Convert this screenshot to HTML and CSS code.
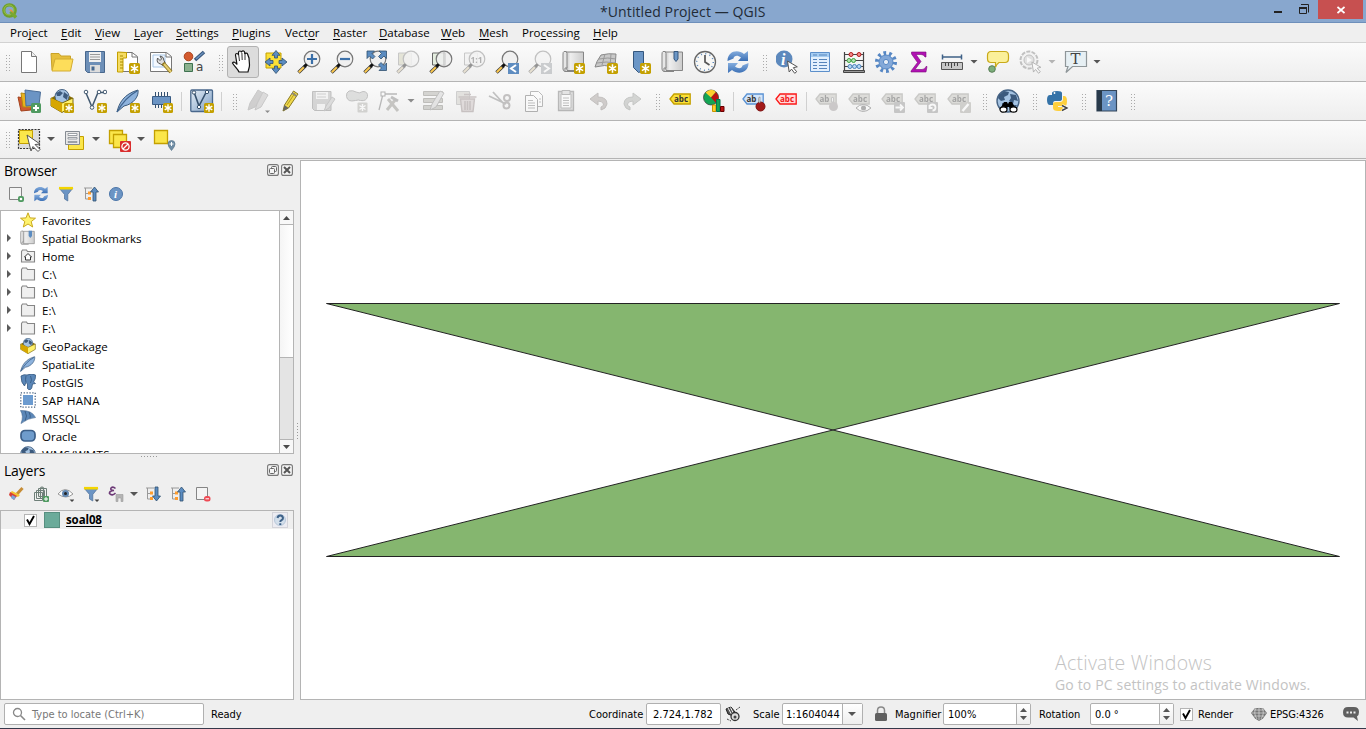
FILE: index.html
```html
<!DOCTYPE html>
<html lang="en">
<head>
<meta charset="utf-8">
<title>*Untitled Project — QGIS</title>
<link rel="stylesheet" href="styles.css">
</head>
<body>
<svg class="defs" width="0" height="0" aria-hidden="true">
  <defs>
    <linearGradient id="gGray" x1="0" x2="1"><stop offset="0" stop-color="#bdbdbd"/><stop offset=".3" stop-color="#eee"/><stop offset="1" stop-color="#ccc"/></linearGradient>
    <linearGradient id="gBlue" x1="0" x2="1" y2="1"><stop offset="0" stop-color="#e4edf6"/><stop offset="1" stop-color="#7f9fc4"/></linearGradient>
    <linearGradient id="gSync" y2="1" x2="0"><stop offset="0" stop-color="#86aede"/><stop offset="1" stop-color="#3a6fb5"/></linearGradient>
  </defs>
  <symbol id="star" viewBox="0 0 10 10"><rect width="10" height="10" rx="1.5" fill="#c4a000"/><path d="M5 1.2v7.6M1.7 3.1l6.6 3.8M8.3 3.1L1.7 6.9" stroke="#fff" stroke-width="1.4"/></symbol>
  <symbol id="lens" viewBox="0 0 24 24"><circle cx="15" cy="9" r="7.8" fill="#eee" fill-opacity=".85" stroke="#777" stroke-width="1.2"/><path d="M1.500 22.500l7-6.800" stroke="#3a3a3a" stroke-width="3.400"/><path d="M1.800 22.200l5-4.900" stroke="#fcc94f" stroke-width="2"/><path d="M7.500 16.500l2.300-2.300" stroke="#111" stroke-width="3"/></symbol>
  <symbol id="cursor" viewBox="0 0 12 14"><path d="M1 1l9.800 5.800-4 .9 3.400 4-2 1.600-3.200-4.200L2.700 12z" fill="#fff" stroke="#555" stroke-width="1"/></symbol>
  <symbol id="sync" viewBox="0 0 24 24"><path d="M1.500 11C1.500 1 12-1 18 4l4-3V11h-10l3-3.500C11 4.500 8 6 7.500 8.500z" fill="url(#gSync)"/><path d="M22.500 13c0 10-10.500 12-16.500 7l-4 3V13h10l-3 3.500c4 3 7 1.500 7.500-1z" fill="url(#gSync)"/></symbol>
  <symbol id="globe" viewBox="0 0 24 24"><circle cx="12" cy="12" r="11" fill="#a5c3e2" stroke="#476485" stroke-width="1.400"/><path d="M3 6l5-4 5 1-1 3-4 2 1 3-4 1-3-3zM14 5l6 1 2 6-4-1-1 4-4-3 2-3zM6 14l5 1 1 4-3 3-3-4zM17 16l4 0-3 4z" fill="#3c5a7d"/></symbol>
  <symbol id="tag" viewBox="0 0 22 12"><path d="M1 6l4-5h16.200v10H5z" stroke-width="1.300"/></symbol>
  <symbol id="feather" viewBox="0 0 24 24"><path d="M1 23C3 14 8 5 22 1c1 6-4 14-14 16z" fill="#8db2dc" stroke="#3a597b"/><path d="M1 23C6 14 12 7 21 2" fill="none" stroke="#3f648f" stroke-width="1.300"/></symbol>
  <symbol id="gpkg" viewBox="0 0 24 24"><path d="M1 9l11-6 11 6-11 6z" fill="#8a6d00"/><circle cx="12" cy="7.500" r="7" fill="#a5c3e2" stroke="#476485"/><path d="M6 4l4-2 3 2-3 3-3 0zM14 3l4 3-1 5-4-3z" fill="#3c5a7d"/><path d="M1 9l11 5 11-5v8l-11 6.500L1 17z" fill="#fff16b" stroke="#6b5900" stroke-width=".9"/><path d="M1 9l11 5v9.500L1 17z" fill="#d6a600"/></symbol>
  <symbol id="pencil" viewBox="0 0 24 24"><path d="M4 22l1.500-6L14.500 2l4.500 3L9.500 19z" fill="#f0d84a" stroke="#8a7a22"/><path d="M13 4l4.500 3" stroke="#888" stroke-width="2"/><path d="M4 22l1.500-6 4 3z" fill="#666"/><path d="M8 16l8-12" stroke="#b19b20" stroke-width="1"/></symbol>
  <symbol id="roll" viewBox="0 0 24 24"><path d="M3 2h18.500v18.500H5z" fill="url(#gGray)" stroke="#858585"/><path d="M2 1.500q3-1 3 2V18H3v3.500Q1 21 1 19V4Q1 2 2 1.500zM3 21.500h10" fill="#e6e6e6" stroke="#858585"/></symbol>
  <symbol id="folder" viewBox="0 0 16 16"><path d="M1.500 3.500l1-1.500h4l1 1.500h7v10.500h-13z" fill="#efefef" stroke="#858585" stroke-width="1.100"/></symbol>
  <symbol id="funnel" viewBox="0 0 16 16"><path d="M1 2h14L9.800 8.500V15L6.500 13V8.500z" fill="#6b94c4" stroke="#4c6f98" stroke-width=".7"/><path d="M1 2.200h14" stroke="#f4d500" stroke-width="2.600"/></symbol>
  <symbol id="treeup" viewBox="0 0 16 16"><path d="M1 2h8M2.500 2v11M2.500 7.500h4M2.500 13h4" fill="none" stroke="#999"/><path d="M5 5.500h3v3H5zM5 11h3v3H5z" fill="#ff9d2e"/><path d="M11.500 1l4 5h-2.500v9h-3V6H7.500z" fill="#5b8cc1" stroke="#31506f" stroke-width=".8"/></symbol>
  <symbol id="treedown" viewBox="0 0 16 16"><path d="M1 2h8M2.500 2v11M2.500 7.500h4M2.500 13h4" fill="none" stroke="#999"/><path d="M5 5.500h3v3H5zM5 11h3v3H5z" fill="#ff9d2e"/><path d="M11.500 15l4-5h-2.500V1h-3v9H7.500z" fill="#5b8cc1" stroke="#31506f" stroke-width=".8"/></symbol>
  <symbol id="float" viewBox="0 0 12 12"><rect x=".6" y=".6" width="10.800" height="10.800" rx="2" fill="#f4f4f4" stroke="#777" stroke-width="1.100"/><rect x="4.500" y="2.500" width="5" height="5" rx="1" fill="none" stroke="#666"/><rect x="2.500" y="4.500" width="5" height="5" rx="1" fill="#f4f4f4" stroke="#666"/></symbol>
  <symbol id="close" viewBox="0 0 12 12"><rect x=".6" y=".6" width="10.800" height="10.800" rx="2" fill="#f4f4f4" stroke="#777" stroke-width="1.100"/><path d="M3 3l6 6M9 3l-6 6" stroke="#555" stroke-width="2"/></symbol>
</svg>

<header class="titlebar">
  <svg class="app-icon" viewBox="0 0 16 16"><circle cx="7.500" cy="7.500" r="5.700" fill="none" stroke="#6fa02b" stroke-width="3.200"/><circle cx="7" cy="7" r="5" fill="none" stroke="#a8cb55" stroke-width=".7"/><path d="M8.500 8.500l5.500 6" stroke="#78a830" stroke-width="3.400"/><path d="M6.500 6.500h3l2.500 4z" fill="#ee913f"/></svg>
  <div class="window-title">*Untitled Project — QGIS</div>
  <div class="window-buttons">
    <svg class="min" viewBox="0 0 10 14"><path d="M1 12h8" stroke="#222" stroke-width="2"/></svg>
    <svg class="max" viewBox="0 0 12 12"><path d="M3 .5h7.500v8" fill="none" stroke="#222" stroke-width="1"/><path d="M1.500 3.500h7v6h-7z" fill="none" stroke="#222"/><path d="M1 4h8" stroke="#222" stroke-width="2"/></svg>
    <div class="close-btn"><svg viewBox="0 0 8 8"><path d="M.5 1l7 6M7.500 1l-7 6" stroke="#fff" stroke-width="1.700"/></svg></div>
  </div>
</header>

<nav class="menubar">
  <span>Pro<u>j</u>ect</span><span><u>E</u>dit</span><span><u>V</u>iew</span><span><u>L</u>ayer</span><span><u>S</u>ettings</span><span><u>P</u>lugins</span><span>Vect<u>o</u>r</span><span><u>R</u>aster</span><span><u>D</u>atabase</span><span><u>W</u>eb</span><span><u>M</u>esh</span><span>Pro<u>c</u>essing</span><span><u>H</u>elp</span>
</nav>

<div class="toolbar">
  <i class="grip first"></i>
  <svg class="tool" viewBox="0 0 24 24"><path d="M4.500 1.500h10l5 5v16h-15z" fill="#fff" stroke="#777"/><path d="M14.500 1.500v5h5" fill="#eee" stroke="#777"/></svg>
  <svg class="tool" viewBox="0 0 24 24"><path d="M1 3.500h8l2 2.500h9.500v14H2z" fill="#e6bf3c" stroke="#c9a227"/><path d="M5 9h18l-2.500 12H2z" fill="#fddd5a" stroke="#d3ac32"/></svg>
  <svg class="tool" viewBox="0 0 24 24"><path d="M2.500 1.500h19v21H4.500l-2-2z" fill="#6d8fb7" stroke="#48678c"/><path d="M6 2h12v10H6z" fill="#f0f0f0"/><path d="M7 4.500h10M7 7h10M7 9.500h10" stroke="#999"/><path d="M7 15h10v7.500H7z" fill="#ddd"/><path d="M8.500 16.500h3v4h-3z" fill="#456890"/></svg>
  <svg class="tool" viewBox="0 0 24 24"><path d="M2 2.500h14l5.500 4v15H2z" fill="#fff" stroke="#777"/><path d="M16 2.500v4.500h5" fill="none" stroke="#777"/><path d="M1.500 2v20h5.500V8h3.500V2.500z" fill="#f5dc63" stroke="#c4a000"/><path d="M4 6h3M4 9h3M4 12h3M4 15h3M4 18h3" stroke="#a98c00"/><use href="#star" x="13" y="13" width="11" height="11"/></svg>
  <svg class="tool" viewBox="0 0 24 24"><path d="M1.500 2.500h16l5 4v15h-21z" fill="#fff" stroke="#777"/><path d="M4 5h12v12H4z" fill="#f4f9ff" stroke="#a7c6e6"/><path d="M17 2.500V7h5" fill="none" stroke="#777"/><path d="M8.500 8q-1.500 5 3 6l2.500 1.500 2-3-1-2q0-4-4-4.500l1.500 3-1.500 1.500z" fill="#ddd" stroke="#555"/><path d="M14 13l8 9" stroke="#8b7320" stroke-width="3.800"/><path d="M15 14l7 8" stroke="#e6cf70" stroke-width="2"/></svg>
  <svg class="tool" viewBox="0 0 24 24"><circle cx="6.500" cy="6.500" r="4.300" fill="#d35a2e" stroke="#aa401a"/><path d="M13 10L22 2" stroke="#39567b" stroke-width="3.600"/><path d="M14 9l7.500-6.500" stroke="#6b92bf" stroke-width="1.500"/><path d="M2.500 13.500h8v8h-8z" fill="#8bb18e" stroke="#3e7250"/><text x="14" y="21" class="glyph-a">a</text></svg>
  <i class="grip wide"></i>
  <svg class="tool active" viewBox="0 0 24 24"><path d="M8 22c-1-3-5-6-6.500-9 1-2 3-.5 4.500 1.500L4.500 5c0-2 2.500-2 3 0V2.500c0-2 2.800-2 3 0V2c.5-1.800 3-1.500 3.200.5V4c.6-1.500 2.800-1.200 3 .5L18 8l.5 7c0 3-1 4-1.500 7z" fill="#fff" stroke="#111" stroke-width="1.200"/><path d="M7.700 5l.8 6M10.900 3l.3 7M14 4v6" stroke="#333"/></svg>
  <svg class="tool" viewBox="0 0 24 24"><path d="M2 3h15v15H2z" fill="#fbe036" stroke="#c4a000"/><path d="M12 .5l4 4.800h-2.500V8h-3V5.300H8zM12 23.500l4-4.800h-2.500V16h-3v2.700H8zM1 12l5-4v2.500h3v3H6V16zM23 12l-5-4v2.500h-3v3h3V16z" fill="#5b8cc1" stroke="#31506f" stroke-width=".8"/></svg>
  <svg class="tool" viewBox="0 0 24 24"><use href="#lens"/><path d="M15 4v10M10 9h10" stroke="#3c70a8" stroke-width="2.200"/></svg>
  <svg class="tool" viewBox="0 0 24 24"><use href="#lens"/><path d="M10 9h10" stroke="#3c70a8" stroke-width="2.200"/></svg>
  <svg class="tool" viewBox="0 0 24 24"><use href="#lens"/><path d="M4 1h7.500L9 3.500l3 3L9.500 9l-3-3L4 8.500zM23.500 1v7.500L21 6l-3 3-2.500-2.500 3-3L16 1zM23.500 20.500H16l2.500-2.500-3-3 2.500-2.500 3 3 2.500-2.500z" fill="#5b8cc1" stroke="#31506f" stroke-width=".8"/></svg>
  <svg class="tool off" viewBox="0 0 24 24"><path d="M2.500 3h13v12h-13z" fill="#d3d06c" stroke="#888"/><use href="#lens"/></svg>
  <svg class="tool" viewBox="0 0 24 24"><path d="M3.500 3h13v12h-13z" fill="#e5eee0" stroke="#666"/><use href="#lens"/><path d="M15 2v14" stroke="#bbb"/></svg>
  <svg class="tool off" viewBox="0 0 24 24"><path d="M2.500 3h13v12h-13z" fill="#eee" stroke="#888"/><use href="#lens"/><text x="8.500" y="12.500" class="glyph-ratio">1:1</text></svg>
  <svg class="tool" viewBox="0 0 24 24"><use href="#lens"/><path d="M13 13h11v11H13z" fill="#5e8cc0"/><path d="M21 15l-5 3.500 5 3.500" fill="none" stroke="#fff" stroke-width="2"/></svg>
  <svg class="tool off" viewBox="0 0 24 24"><use href="#lens"/><path d="M13 13h11v11H13z" fill="#8a9aa8"/><path d="M16 15l5 3.500-5 3.500" fill="none" stroke="#fff" stroke-width="2"/></svg>
  <svg class="tool" viewBox="0 0 24 24"><use href="#roll" x="1"/><use href="#star" x="13" y="13" width="11" height="11"/></svg>
  <svg class="tool" viewBox="0 0 24 24"><path d="M7 5q8-2 15-1l-1 13Q10 14 1 17q1-5 6-12z" fill="#c9c9c9" stroke="#888"/><path d="M5 9q9-2 17 0M3 13q9-2 19 0M11 4L8 15M17 4l-1 12" fill="none" stroke="#999"/><use href="#star" x="13" y="13" width="11" height="11"/></svg>
  <svg class="tool" viewBox="0 0 24 24"><path d="M6.500 1.500h10v19l-5 2-5-5z" fill="#6b96c6" stroke="#35577e"/><use href="#star" x="13" y="13" width="11" height="11"/></svg>
  <svg class="tool" viewBox="0 0 24 24"><use href="#roll" x="1"/><path d="M14 1.500h4V9l-2 2.500L14 9z" fill="#6b96c6" stroke="#35577e"/></svg>
  <svg class="tool" viewBox="0 0 24 24"><circle cx="12" cy="12" r="10.500" fill="#f7f7f5" stroke="#666" stroke-width="1.300"/><circle cx="12" cy="12" r="8.300" fill="none" stroke="#5c88bb" stroke-width="1.500" stroke-dasharray="1 3.350"/><path d="M12 5v7l4.500 3" fill="none" stroke="#555" stroke-width="1.700"/></svg>
  <svg class="tool" viewBox="0 0 24 24"><use href="#sync"/></svg>
  <i class="grip wide"></i>
  <svg class="tool" viewBox="0 0 24 24"><circle cx="8" cy="9" r="8.500" fill="#5d89bd"/><text x="5" y="15" class="glyph-info">i</text><use href="#cursor" x="10.500" y="10" width="12" height="14"/></svg>
  <svg class="tool" viewBox="0 0 24 24"><path d="M1.500 2.500h19v19h-19z" fill="#e3f0fd" stroke="#5c8fca"/><path d="M2 3h18v4H2z" fill="#a5ccf1"/><path d="M4 5h4M10 5h8M4 9.500h4M10 9.500h8M4 12.500h4M10 12.500h8M4 15.500h4M10 15.500h8M4 18.500h4M10 18.500h8" stroke="#5685bb"/></svg>
  <svg class="tool" viewBox="-1 0 24 24"><path d="M1.500 2v19M20.500 2v19M1 4.500h20M1 10.500h20M1 16.500h20" stroke="#444" stroke-width="1.200"/><path d="M.5 20.500h21v2h-21z" fill="#999" stroke="#444"/><g fill="#f28a8a" stroke="#b41919"><circle cx="8" cy="4.500" r="2"/><circle cx="16" cy="4.500" r="2"/></g><g fill="#b4e2b4" stroke="#40a340"><circle cx="6" cy="10.500" r="2"/><circle cx="10.500" cy="10.500" r="2"/></g><g fill="#b9d8f5" stroke="#4c83bb"><circle cx="7" cy="16.500" r="2"/><circle cx="11.500" cy="16.500" r="2"/><circle cx="16" cy="16.500" r="2"/></g></svg>
  <svg class="tool" viewBox="1 0 24 24"><circle cx="12" cy="12" r="9" fill="none" stroke="#5687c4" stroke-width="4" stroke-dasharray="2.700 2.955"/><circle cx="12" cy="12" r="7" fill="#83a8d8" stroke="#5687c4"/><circle cx="12" cy="12" r="2.600" fill="#e7eef7" stroke="#5687c4"/></svg>
  <svg class="tool" viewBox="1 0 24 24"><path d="M4.500 2h14.500v5h-1Q17 4.500 14 4.500H9l5 7-6 8h7q3 0 4-3h1l-1 5.500H4V21l6.500-8.500L4.500 4z" fill="#b112b3" stroke="#780b7a" stroke-width=".6"/></svg>
  <svg class="tool" viewBox="1 0 24 24"><path d="M2 7h20M2.500 4.500v5M21.500 4.500v5" stroke="#3f6187" stroke-width="1.500"/><path d="M1.500 12.500h21v7h-21z" fill="#c8c8c8" stroke="#555"/><path d="M5.500 13v3M8.500 13v3M11.500 13v5M14.500 13v3M17.500 13v3" stroke="#444"/></svg>
  <i class="arrow"></i>
  <svg class="tool" viewBox="0 0 24 24"><path d="M5 1.500h14q3.500 0 3.500 4v3q0 4-3.500 4h-6q-3 2-3.500 5 0-3 0-5H5q-3.500 0-3.500-4v-3q0-4 3.500-4z" fill="#fbf09a" stroke="#c9aa1a" stroke-width="1.200"/><circle cx="6" cy="19" r="3.300" fill="#7bae7a" stroke="#587d56"/></svg>
  <svg class="tool off" viewBox="0 0 24 24"><circle cx="10" cy="10" r="8.500" fill="#eee" stroke="#777" stroke-width="2" stroke-dasharray="4 1.300"/><circle cx="10" cy="10" r="5" fill="#c6c6c6" stroke="#777"/><path d="M8 7l5 3-5 3z" fill="#fff"/><use href="#cursor" x="12" y="11" width="11" height="13"/></svg>
  <i class="arrow faint"></i>
  <svg class="tool" viewBox="0 0 24 24"><path d="M1.500 1.500h21v15H8.500l-6.500 6 2-6H1.500z" fill="#e7f0f4" stroke="#8f9699" stroke-width="1.200"/><text x="6.500" y="14" class="glyph-t">T</text></svg>
  <i class="arrow"></i>
</div>

<div class="toolbar">
  <i class="grip first"></i>
  <svg class="tool" viewBox="0 0 24 24"><path d="M1 8l14 2-1 11-10 1z" fill="#cf5b30" stroke="#a3411c"/><path d="M4 4l13 2-1 12H6z" fill="#e9b31e" stroke="#b98a0c"/><path d="M8 1l15.500 2-1.500 13-13 1z" fill="#6b94c4" stroke="#4b6e98"/><rect x="14" y="14" width="10" height="10" rx="1.500" fill="#4f9a60"/><path d="M19 16v6M16 19h6" stroke="#fff" stroke-width="2"/></svg>
  <svg class="tool" viewBox="0 0 24 24"><use href="#gpkg"/><use href="#star" x="14" y="14" width="10" height="10"/></svg>
  <svg class="tool" viewBox="0 0 24 24"><path d="M3 4l6 14L15 3.500h7" fill="none" stroke="#425970" stroke-width="1.500"/><g fill="#fff" stroke="#425970"><circle cx="3" cy="3" r="1.800"/><circle cx="9" cy="18.500" r="1.800"/><circle cx="16" cy="3" r="1.800"/><circle cx="22" cy="3" r="1.800"/></g><use href="#star" x="14" y="14" width="10" height="10"/></svg>
  <svg class="tool" viewBox="0 0 24 24"><use href="#feather"/><use href="#star" x="14" y="14" width="10" height="10"/></svg>
  <svg class="tool" viewBox="0 0 24 24"><path d="M6.500 3v16M9.500 3v16M12.500 3v16M15.500 3v16M18.500 3v16" stroke="#34506f"/><path d="M3.500 7.500h18v8h-18z" fill="#6b94c4" stroke="#3a5c84"/><use href="#star" x="14" y="14" width="10" height="10"/></svg>
  <i class="sep"></i>
  <svg class="tool" viewBox="0 0 24 24"><rect x=".8" y="1" width="21.700" height="21.500" rx="1" fill="url(#gBlue)" stroke="#48678c" stroke-width="1.300"/><path d="M4 3l5 14L16 3.500" fill="none" stroke="#35506c" stroke-width="1.600"/><g fill="#fff" stroke="#35506c"><circle cx="4" cy="3.500" r="1.700"/><circle cx="9" cy="18" r="1.700"/><circle cx="17" cy="3" r="1.700"/></g><use href="#star" x="14" y="14" width="10" height="10"/></svg>
  <i class="sep thin"></i>
  <i class="grip"></i>
  <svg class="tool off" viewBox="0 0 24 24"><path d="M2 21l2-7L12 1l5 3-8 14z" fill="#a29c9c" stroke="#8d8888"/><path d="M9 21l2-6L17 3l5 3-7 12z" fill="#bcb6b6" stroke="#8d8888"/><path d="M19 21.500h5l-2.500 2.500z" fill="#000"/></svg>
  <svg class="tool" viewBox="0 0 24 24"><use href="#pencil"/></svg>
  <svg class="tool off" viewBox="0 0 24 24"><path d="M.5 2.500h18.500v19H2.500l-2-2z" fill="#aaa" stroke="#777"/><path d="M4 3h12v7H4z" fill="#eee"/><path d="M5 5h9M5 8h9" stroke="#999"/><path d="M5 15h8v6H5z" fill="#eee"/><path d="M12 22l2-5 6-9 3 2-6 9z" fill="#bbb" stroke="#888"/></svg>
  <svg class="tool off" viewBox="0 0 24 24"><path d="M4 2q4-1 7 1t7-.500q5 0 4.500 5-1 5-7 4-2-1-5 0-8 2-9-4-.5-4 2.500-5.500z" fill="#b9bfb9" stroke="#777"/><rect x="12.500" y="13.500" width="10" height="10" rx="1" fill="#a9a796"/><path d="M17.500 15v7M14.500 16.500l6 4M20.500 16.500l-6 4" stroke="#fff" stroke-width="1.400"/></svg>
  <svg class="tool off" viewBox="0 0 24 24"><path d="M1 21L5 5l14 0" fill="none" stroke="#666" stroke-width="1.300"/><rect x="3" y="3" width="4" height="4" fill="#fff" stroke="#555"/><path d="M10 10l10 12M9 21l9-11" stroke="#8b8570" stroke-width="3"/><path d="M13 8l7 4" stroke="#777" stroke-width="3"/></svg>
  <i class="arrow mid"></i>
  <svg class="tool off" viewBox="0 0 24 24"><path d="M1.500 2.500h19v4h-19zM1.500 9.500h19v4h-19zM1.500 16.500h19v4h-19z" fill="#aaa68a" stroke="#77745d"/><path d="M8 21l2-6 8-13 4 2-8 14z" fill="#ccc" stroke="#777"/></svg>
  <svg class="tool off" viewBox="0 0 24 24"><path d="M1.500 2.500h13v13h-13z" fill="#cbc6ac" stroke="#999"/><path d="M5.500 10h14l-1.500 12.500H7z" fill="#d9b5b5" stroke="#a87a7a" stroke-width="1.400"/><path d="M3.500 8h18M9 5.500h7M10 12v9M12.500 12v9M15 12v9" stroke="#a87a7a" stroke-width="1.600"/></svg>
  <svg class="tool off" viewBox="0 0 24 24"><path d="M1 7l17 8M5 3l11 12" stroke="#777" stroke-width="1.800"/><circle cx="19" cy="9" r="3" fill="none" stroke="#867878" stroke-width="2"/><circle cx="18.500" cy="16.500" r="3" fill="none" stroke="#867878" stroke-width="2"/></svg>
  <svg class="tool off" viewBox="0 0 24 24"><path d="M9.500 2.500h8l4 4v11h-12z" fill="#fff" stroke="#666"/><path d="M4.500 6.500h8l4 4v12h-12z" fill="#fff" stroke="#555"/><path d="M7 11.500h5M7 14h7M7 16.500h7M7 19h7M18 10h2M18 13h2" stroke="#777"/></svg>
  <svg class="tool off" viewBox="0 0 24 24"><path d="M4.500 2.500h15v19h-15z" fill="#bbb" stroke="#666" stroke-width="1.300"/><path d="M7 5h10v14H7z" fill="#fff" stroke="#777"/><path d="M8 1.500h8v4H8z" fill="#ccc" stroke="#666"/><path d="M9 9h6M9 11.500h6M9 14h6M9 16.500h6" stroke="#777"/></svg>
  <svg class="tool off" viewBox="0 0 24 24"><path d="M3 10l8-6v4q9 0 9 7-1 5-6 6v-3q3-1 2.500-3-1-3-5.500-3v4z" fill="#ad9185" stroke="#86736a"/></svg>
  <svg class="tool off" viewBox="0 0 24 24"><path d="M21 10l-8-6v4q-9 0-9 7 1 5 6 6v-3q-3-1-2.500-3 1-3 5.500-3v4z" fill="#a0aa9e" stroke="#7d877b"/></svg>
  <i class="grip"></i>
  <svg class="tool" viewBox="0 0 24 24"><use href="#tag" x="0" y="4" width="22" height="12" fill="#fbe036" stroke="#c4a000"/><text x="5" y="12.500" class="glyph-abc">abc</text></svg>
  <svg class="tool" viewBox="0 0 24 24"><circle cx="9" cy="8.500" r="7.500" fill="#13a554" stroke="#333" stroke-width=".7"/><path d="M9 8.500L3.500 3.500Q9-1.500 14 3z" fill="#fdd02f"/><path d="M9 8.500L14 3q5 6 0 11z" fill="#ba1313"/><path d="M10.500 16h3.500v6.500h-3.500z" fill="#fdd02f" stroke="#c79200"/><path d="M14.500 10.500H18v12h-3.500z" fill="#13a554" stroke="#075"/><path d="M18.500 17.500H22v5h-3.500z" fill="#ba1313" stroke="#600"/></svg>
  <i class="sep thin"></i>
  <svg class="tool" viewBox="0 0 24 24"><use href="#tag" x="0" y="4" width="22" height="12" fill="#d3e5fa" stroke="#5b92d3"/><text x="4.500" y="12.500" class="glyph-abc">ab</text><circle cx="18.500" cy="17.500" r="4.500" fill="#a31a1a" stroke="#7c1010"/><path d="M16.500 13V9.500q0-1.500 1.500-1.500v6z" fill="#ddd" stroke="#888" stroke-width=".6"/></svg>
  <svg class="tool" viewBox="0 0 24 24"><use href="#tag" x="0" y="4" width="22" height="12" fill="#ffd9d9" stroke="#fb1818"/><text x="5" y="12.500" class="glyph-abc red">abc</text></svg>
  <i class="sep thin"></i>
  <svg class="tool off" viewBox="0 0 24 24"><use href="#tag" x="0" y="4" width="22" height="12" fill="#bdbba2" stroke="#8e8d7b"/><text x="4.500" y="12.500" class="glyph-abc">ab</text><circle cx="18.500" cy="17.500" r="4.500" fill="#a08c90"/><path d="M16.500 13V8.500h2V13z" fill="#eee" stroke="#888"/></svg>
  <svg class="tool off" viewBox="0 0 24 24"><use href="#tag" x="0" y="4" width="22" height="12" fill="#bdbba2" stroke="#8e8d7b"/><text x="5" y="12.500" class="glyph-abc">abc</text><path d="M8 19q7-7 15 0-8 7-15 0z" fill="#fff" stroke="#555"/><circle cx="15.500" cy="19" r="2.500" fill="#555"/></svg>
  <svg class="tool off" viewBox="0 0 24 24"><use href="#tag" x="0" y="4" width="22" height="12" fill="#bdbba2" stroke="#8e8d7b"/><text x="5" y="12.500" class="glyph-abc">abc</text><rect x="13" y="13" width="11" height="11" rx="1" fill="#8b8b8b"/><path d="M14.500 18.500h7M19 15.500l3 3-3 3" fill="none" stroke="#fff" stroke-width="1.800"/></svg>
  <svg class="tool off" viewBox="0 0 24 24"><use href="#tag" x="0" y="4" width="22" height="12" fill="#bdbba2" stroke="#8e8d7b"/><text x="5" y="12.500" class="glyph-abc">abc</text><rect x="13" y="13" width="11" height="11" rx="1" fill="#8b8b8b"/><path d="M15.500 18.500q0-3 3-3t3 3-3 3M15.500 16v3h3" fill="none" stroke="#fff" stroke-width="1.800"/></svg>
  <svg class="tool off" viewBox="0 0 24 24"><use href="#tag" x="0" y="4" width="22" height="12" fill="#bdbba2" stroke="#8e8d7b"/><text x="5" y="12.500" class="glyph-abc">abc</text><rect x="13" y="13" width="11" height="11" rx="1" fill="#a19f88"/><path d="M15.500 22l6-7" stroke="#fff" stroke-width="2.400"/></svg>
  <i class="grip"></i>
  <svg class="tool" viewBox="0 0 24 24"><use href="#globe"/><path d="M4 20l4-7h3l1 2 1-2h3l4 7q-2-2-6 0l-1-2h-2l-1 2q-4-2-6 0z" fill="#000"/><ellipse cx="7.500" cy="20.500" rx="3.500" ry="2.700" fill="#fff" stroke="#000" stroke-width="1.200"/><ellipse cx="17.500" cy="20.500" rx="3.500" ry="2.700" fill="#fff" stroke="#000" stroke-width="1.200"/></svg>
  <i class="grip wide"></i>
  <svg class="tool" viewBox="0 0 24 24"><path d="M6 6V4q0-2 5-2t5 2v6q0 2-3 2H9q-2 0-2 3v1H4q-3 0-3-5t3-5h7V6z" fill="#3573a8"/><circle cx="8.500" cy="4" r=".9" fill="#fff"/><path d="M17 7h1q3 0 3 5t-2 5h-7v1h5v2q0 2-5 2t-5-3v-4q0-2 3-2h4q3 0 3-3z" fill="#fdcf3d"/><path d="M16 16.500l5 2.500-5 2.500" fill="none" stroke="#fff" stroke-width="3"/><path d="M16 16.500l5 2.500-5 2.500" fill="none" stroke="#444" stroke-width="1.400"/></svg>
  <i class="grip"></i>
  <svg class="tool" viewBox="0 0 24 24"><path d="M2 1.500h19.500v20.500H2z" fill="#6b94c4" stroke="#34465a" stroke-width="1.200"/><path d="M2 1.500h5v20.500H2z" fill="#293a4b"/><text x="10" y="17" class="glyph-q">?</text></svg>
  <i class="grip"></i>
</div>

<div class="toolbar last">
  <i class="grip first"></i>
  <svg class="tool" viewBox="0 0 24 24"><path d="M1.500 1.500h21v19h-21z" fill="#ddd" stroke="#333" stroke-width="1.200" stroke-dasharray="2 1.200"/><path d="M2.500 2.500h13v13h-13z" fill="#fbe64a" stroke="#c4a000"/><path d="M10 7l13 9-5 .5 5 5-2 2-5-5-2 4.500z" fill="#fff" stroke="#555"/></svg>
  <i class="arrow"></i>
  <svg class="tool" viewBox="0 0 24 24"><path d="M6.500 8.500h15v13h-15z" fill="#fbe64a" stroke="#c4a000"/><path d="M3.500 3.500h14v13h-14z" fill="#e8e8e8" stroke="#858b92"/><path d="M6 5.500h9v2H6zM6 9.500h9v1.500H6zM6 13.500h9v1H6z" fill="#fff" stroke="#858b92" stroke-width=".8"/></svg>
  <i class="arrow"></i>
  <svg class="tool" viewBox="0 0 24 24"><path d="M2.500 2.500h13v13h-13z" fill="#fbe64a" stroke="#c4a000" stroke-width="1.300"/><path d="M6.500 6.500h13v13h-13z" fill="#fbe64a" stroke="#c4a000" stroke-width="1.300"/><rect x="13" y="13" width="11" height="11" rx="1" fill="#d92d2d"/><circle cx="18.500" cy="18.500" r="3.600" fill="none" stroke="#fff" stroke-width="1.300"/><path d="M16 21l5-5" stroke="#fff" stroke-width="1.300"/></svg>
  <i class="arrow"></i>
  <svg class="tool" viewBox="0 0 24 24"><path d="M2.500 2.500h13v13h-13z" fill="#fbe64a" stroke="#c4a000" stroke-width="1.300"/><path d="M19.500 22.500q-3.500-4-3.500-6.500a3.500 3.500 0 0 1 7 0q0 2.500-3.500 6.500z" fill="#6f8da5" stroke="#58758c" stroke-width=".7"/><path d="M19.500 14v4M17.500 16h4" stroke="#fff"/></svg>
</div>

<main class="workspace">
  <aside class="docks">
    <section class="dock browser">
      <div class="dock-title"><h2>Browser</h2><svg viewBox="0 0 12 12"><use href="#float"/></svg><svg viewBox="0 0 12 12"><use href="#close"/></svg></div>
      <div class="dock-tools">
        <svg viewBox="0 0 16 16"><path d="M1.500 1.500h12v12h-12z" fill="#f4f4f4" stroke="#858585"/><rect x="10" y="10" width="6" height="6" rx="2" fill="#4f9a60"/><circle cx="13" cy="13" r="1.300" fill="#fff"/></svg>
        <svg viewBox="0 0 24 24"><use href="#sync"/></svg>
        <svg viewBox="0 0 16 16"><use href="#funnel"/></svg>
        <svg viewBox="0 0 16 16"><use href="#treeup"/></svg>
        <svg viewBox="0 0 16 16"><circle cx="8" cy="8" r="6.500" fill="#6b94c4" stroke="#4c76a9"/><text x="6" y="12" class="glyph-info small">i</text></svg>
      </div>
      <div class="tree">
        <ul>
          <li><b></b><svg viewBox="0 0 16 16"><path d="M8 .8l2 5.100 5.500.300-4.300 3.400 1.500 5.400L8 12l-4.700 3 1.500-5.400L.5 6.200 6 5.900z" fill="#fff36d" stroke="#c9a81d"/></svg><span>Favorites</span></li>
          <li><b class="twisty"></b><svg viewBox="0 0 24 24"><use href="#roll"/><path d="M13 1h5v8l-2.500 3L13 9z" fill="#5b8cc1"/></svg><span>Spatial Bookmarks</span></li>
          <li><b class="twisty"></b><svg viewBox="0 0 16 16"><use href="#folder"/><path d="M4.500 9L8 5.500 11.500 9h-1v3h-5V9z" fill="#fff" stroke="#333"/></svg><span>Home</span></li>
          <li><b class="twisty"></b><svg viewBox="0 0 16 16"><use href="#folder"/></svg><span>C:\</span></li>
          <li><b class="twisty"></b><svg viewBox="0 0 16 16"><use href="#folder"/></svg><span>D:\</span></li>
          <li><b class="twisty"></b><svg viewBox="0 0 16 16"><use href="#folder"/></svg><span>E:\</span></li>
          <li><b class="twisty"></b><svg viewBox="0 0 16 16"><use href="#folder"/></svg><span>F:\</span></li>
          <li><b></b><svg viewBox="0 0 24 24"><use href="#gpkg"/></svg><span>GeoPackage</span></li>
          <li><b></b><svg viewBox="0 0 24 24"><use href="#feather"/></svg><span>SpatiaLite</span></li>
          <li><b></b><svg viewBox="0 0 16 16"><path d="M1 2q3-2 6-1 5-2 8.500 0 .5 4-2 7l2 1.500-3 .5q-.5 5-2 5.500-2.500.5-3-1V10L6 8.500 4.500 12Q1 9 1 2z" fill="#5b87b8" stroke="#35587f" stroke-width=".8"/><path d="M6 2q-1 4 0 6M10.500 2q2 4 0 7" fill="none" stroke="#35587f" stroke-width=".8"/></svg><span>PostGIS</span></li>
          <li><b></b><svg viewBox="0 0 16 16"><path d="M3 3h10v10H3z" fill="#6b9bd0"/><path d="M.8.8h14.400v14.400H.8z" fill="none" stroke="#3c5878" stroke-width="1.200" stroke-dasharray="1.200 1.680"/></svg><span class="wide-text">SAP HANA</span></li>
          <li><b></b><svg viewBox="0 0 16 16"><path d="M.5.500Q12 0 15.500 7.500 8 8 1 13.500 4 6 .5.500z" fill="#5b87b8" stroke="#466a92" stroke-width=".6"/><path d="M5 1q3 5 0 10M9 2q2 4 1 6.500" fill="none" stroke="#35587f" stroke-width=".8"/></svg><span>MSSQL</span></li>
          <li><b></b><svg viewBox="0 0 16 16"><rect x="1" y="2.500" width="14" height="10.500" rx="4" fill="#6f9ccc" stroke="#3c5f89" stroke-width="1.700"/></svg><span>Oracle</span></li>
          <li><b></b><svg viewBox="0 0 24 24"><use href="#globe"/></svg><span class="wide-text">WMS/WMTS</span></li>
        </ul>
        <div class="scrollbar"><div class="step up"></div><div class="thumb"></div><div class="track"></div><div class="step down"></div></div>
      </div>
    </section>
    <div class="splitter"><i></i></div>
    <section class="dock layers">
      <div class="dock-title"><h2>Layers</h2><svg viewBox="0 0 12 12"><use href="#float"/></svg><svg viewBox="0 0 12 12"><use href="#close"/></svg></div>
      <div class="dock-tools">
        <svg viewBox="0 0 16 16"><path d="M9 8l5.500-6" stroke="#c78d35" stroke-width="3"/><path d="M4 5l8 4-2 2-8-4z" fill="#f4c331"/><path d="M2 6l7 4-3 4-5-5z" fill="#d83e37"/><path d="M4 9l4 2-2 3-3-2z" fill="#7aa4da"/></svg>
        <svg viewBox="0 0 16 16"><path d="M1.500 6.500h8v8h-8zM3.500 4.500h8v8h-8zM5.500 2.500h8v8h-8z" fill="#f2f2f2" stroke="#6e7f78"/><path d="M7.500 12V2q1.500-2 3 0v9" fill="none" stroke="#6e7f78" stroke-width="1.200"/><rect x="10" y="10" width="6" height="6" rx="1" fill="#4f9a60"/><path d="M13 11v4M11 13h4" stroke="#fff"/></svg>
        <svg viewBox="0 0 16 16"><path d="M0 8q7-9 15 0-7 6-15 0z" fill="#fff" stroke="#999"/><circle cx="7.500" cy="7.500" r="3.500" fill="#6288b2"/><circle cx="7.500" cy="7.500" r="1.500" fill="#222"/><path d="M11.500 13.500h5L14 16z" fill="#444"/></svg>
        <svg viewBox="0 0 16 16"><use href="#funnel"/><path d="M11.500 13.500h5L14 16z" fill="#444"/></svg>
        <svg viewBox="0 0 16 16"><path d="M7.500 2.500Q5 0 3 2q-1 2.500 3 2.500Q1 5 1.500 7.500q2.500 3 6-.5" fill="none" stroke="#6d3a77" stroke-width="1.600"/><path d="M8 8.500h7v7h-2V12l-3 0v3.500H8z" fill="#b4b4b4" stroke="#9a9a9a" stroke-width=".6"/></svg>
        <i class="arrow"></i>
        <svg viewBox="0 0 16 16"><use href="#treedown"/></svg>
        <svg viewBox="0 0 16 16"><use href="#treeup"/></svg>
        <svg viewBox="0 0 16 16"><path d="M1.500 1.500h11v12h-11z" fill="#f4f4f4" stroke="#858585"/><rect x="9" y="10" width="6.500" height="5.500" rx="2.500" fill="#ee4a54"/><path d="M10.500 12.800h3.500" stroke="#fff"/></svg>
      </div>
      <div class="layer-list">
        <div class="layer"><span class="check"><svg viewBox="0 0 11 11"><path d="M2 4.500l2.500 4.500L9 1" fill="none" stroke="#000" stroke-width="1.900"/></svg></span><span class="swatch"></span><span class="layer-name">soal08</span>
          <svg class="crs" viewBox="0 0 16 16"><rect x=".5" y=".5" width="15" height="15" fill="#ececf2" stroke="#d4d4da"/><circle cx="8" cy="8" r="5.500" fill="#d3dfeb" stroke="#b8c8da"/><path d="M5.500 6Q6 3.500 8.300 3.500T11 6q0 1.500-1.800 2.300-.9.500-.9 1.600M8.300 11.200v1.900" fill="none" stroke="#3f6289" stroke-width="2"/></svg></div>
      </div>
    </section>
  </aside>
  <div class="vsplit"><i></i></div>
  <div class="canvas">
    <svg width="1064" height="538" viewBox="301 161 1064 538"><path d="M326.500 303.500H1339.500L326.500 556.500H1339.500z" fill="#85b66f" stroke="#232323" stroke-width="1"/></svg>
    <div class="activation"><p class="big">Activate Windows</p><p>Go to PC settings to activate Windows.</p></div>
  </div>
</main>

<footer class="statusbar">
  <div class="field locate"><svg viewBox="0 0 14 14"><circle cx="5.500" cy="5.500" r="4" fill="none" stroke="#888" stroke-width="1.300"/><path d="M8.500 8.500l4.500 4.500" stroke="#888" stroke-width="1.600"/></svg>Type to locate (Ctrl+K)</div>
  <span>Ready</span>
  <span>Coordinate</span>
  <div class="field">2.724,1.782</div>
  <svg class="st-icon" viewBox="0 0 16 16"><path d="M1 3l5-2 4 5-2 4-5-2z" fill="#555" stroke="#222"/><path d="M3 2l4 7M5.500 1.500l3 6" stroke="#eee"/><circle cx="10" cy="10.500" r="4" fill="#ddd" stroke="#333" stroke-width="1.300"/><circle cx="10" cy="11" r="1.500" fill="#444"/><path d="M11 4l4-3M2 13l4 2" stroke="#444" stroke-dasharray="2 1"/></svg>
  <span>Scale</span>
  <div class="field combo">1:1604044<em><i class="arrow"></i></em></div>
  <svg class="st-icon" viewBox="0 0 16 16"><path d="M4.500 8V4.500q0-3.500 3.500-3.500t3.500 3.500V8" fill="none" stroke="#888" stroke-width="1.500"/><rect x="2" y="7" width="12" height="8" rx="1.500" fill="#606060"/></svg>
  <span>Magnifier</span>
  <div class="field spin">100%<em><i></i><i></i></em></div>
  <span>Rotation</span>
  <div class="field spin rotation">0.0 °<em><i></i><i></i></em></div>
  <span class="check"><svg viewBox="0 0 11 11"><path d="M2 4.500l2.500 4.500L9 1" fill="none" stroke="#000" stroke-width="1.900"/></svg></span>
  <span>Render</span>
  <svg class="st-icon" viewBox="0 0 16 16"><path d="M4 2h8l4 5-4 5.500-4 2.500-4-2.500L0 7z" fill="#777"/><path d="M1 7h14M3 4h10M3 10h10M8 1v13M5 2q-3 5 1 11M11 2q3 5-1 11" fill="none" stroke="#ddd" stroke-width=".7"/></svg>
  <span class="epsg">EPSG:4326</span>
  <svg class="st-icon" viewBox="0 0 16 16"><path d="M5 1h6q5 0 5 5 0 3.500-2 4.500l1 4.500-4.500-3.500H5q-5 0-5-5.300Q0 1 5 1z" fill="#606060"/><path d="M3.500 6.500h2M7 6.500h2M10.500 6.500h2" stroke="#eee" stroke-width="2"/></svg>
</footer>
</body>
</html>
```
FILE: styles.css
```css
* { box-sizing: border-box; }
body {
  margin: 0;
  width: 1366px;
  height: 729px;
  overflow: hidden;
  display: flex;
  flex-direction: column;
  background: #efefef;
  color: #000;
  font: 11.5px/18px "Open Sans", "Noto Sans", sans-serif;
}
svg { display: block; flex: none; }
.defs { position: absolute; }

/* Window frame */
.titlebar {
  flex: none;
  height: 23px;
  background: #88a7ce;
  border-bottom: 1px solid #6e8fba;
  display: grid;
  grid-template-columns: 600px 1fr 99px;
}
.app-icon { width: 16px; height: 16px; margin: 3px 0 0 2px; }
.window-title { font-size: 14px; line-height: 23px; color: #222b36; white-space: nowrap; letter-spacing: .1px; }
.window-buttons { display: flex; }
.min { width: 10px; height: 14px; margin-left: 6px; }
.max { width: 12px; height: 12px; margin: 4px 8px 0 15px; }
.close-btn { width: 45px; height: 19px; background: #c75050; display: flex; align-items: center; justify-content: center; }
.close-btn svg { width: 8px; height: 8px; }

.menubar {
  flex: none;
  height: 20px;
  padding-left: 10px;
  border-bottom: 1px solid #d2d2d2;
  display: grid;
  grid-template-columns: 51px 34px 39px 42px 56px 53px 48px 46px 62px 38px 43px 71px 40px;
  line-height: 20px;
  white-space: nowrap;
}
u { text-underline-offset: 2px; text-decoration-thickness: 1px; text-decoration-skip-ink: none; }

/* Toolbars */
.toolbar {
  flex: none;
  height: 39px;
  display: flex;
  align-items: center;
  background: linear-gradient(#fbfbfb, #eee);
  border-bottom: 1px solid #b4b4b4;
}
.toolbar.last { height: 38px; }
.tool { width: 33px; height: 32px; padding: 4px 4px 4px 5px; }
.tool.off { opacity: .42; filter: grayscale(.7); }
.tool.active { background: #dcdcdc; border: 1px solid #b2b2b2; border-radius: 3px; width: 32px; padding: 3px; }
.grip { flex: none; width: 16px; height: 17px; background: radial-gradient(circle, #aaa .6px, transparent 1px) 7px 0 / 3px 3px repeat-y; }
.grip::after { content: ""; display: block; width: 3px; height: 17px; margin-left: 10px; background: radial-gradient(circle, #aaa .6px, transparent 1px) 0 0 / 3px 3px; }
.grip.first { width: 12px; background-position-x: 5px; }
.grip.first::after { margin-left: 8px; }
.grip.wide { width: 17px; background-position-x: 8px; }
.grip.wide::after { margin-left: 11px; }
.sep { flex: none; width: 8px; height: 19px; background: linear-gradient(#d0d0d0, #d0d0d0) 4px 0 / 1px 100% no-repeat; }
.sep.thin { width: 7px; background-position-x: 3px; }
.arrow { flex: none; display: block; width: 12px; height: 5px; background: #555; clip-path: polygon(1px 0, 9px 0, 5px 4px); }
.arrow.faint { background: #b4b4b4; }
.arrow.mid { background: #8b8b8b; width: 11px; }
.last .arrow { clip-path: polygon(2px 0, 10px 0, 6px 4px); }

.glyph-a { font: 12px "DejaVu Sans", sans-serif; fill: #444; }
.glyph-ratio { font: bold 8.5px "Open Sans", sans-serif; fill: #555; }
.glyph-info { font: italic bold 16px "Liberation Serif", serif; fill: #fff; }
.glyph-info.small { font-size: 11px; }
.glyph-t { font: 15px "DejaVu Serif", serif; fill: #444; }
.glyph-abc { font: bold 8px "Open Sans", sans-serif; fill: #333; }
.glyph-abc.red { fill: #f21414; }
.glyph-q { font: 15px "DejaVu Serif", serif; fill: #fff; }

/* Docked panels */
.workspace { flex: none; height: 541px; display: flex; padding-top: 1px; }
.docks { width: 294px; display: flex; flex-direction: column; }
.dock { display: flex; flex-direction: column; }
.browser { height: 294px; }
.layers { flex: 1; }
.dock-title { height: 21px; display: flex; padding: 4px 1px 0 4px; gap: 2px; }
.dock-title svg { width: 12px; height: 12px; }
h2 { flex: 1; margin: -2px 0 0; font-size: 14px; font-weight: 400; line-height: 18px; letter-spacing: -.2px; }
.dock-tools { height: 29px; display: flex; gap: 9px; padding: 5px 0 0 8px; }
.dock-tools svg { width: 16px; height: 16px; }
.dock-tools .arrow { margin: 6px -3px 0 -4px; width: 10px; }
.tree { flex: 1; display: flex; border: 1px solid #b4b4b4; background: #fff; overflow: hidden; }
ul { flex: 1; list-style: none; margin: 0; padding: 0 0 0 5px; }
li { height: 18px; display: flex; align-items: center; white-space: nowrap; }
li span { padding-top: 1px; }
li b { width: 14px; height: 8px; }
li b.twisty { background: #5a5a5a; clip-path: polygon(1px 0, 5px 4px, 1px 8px); }
li svg { width: 16px; height: 16px; margin-right: 6px; }
.wide-text { letter-spacing: .35px; }
.scrollbar { width: 14px; border-left: 1px solid #b4b4b4; display: flex; flex-direction: column; }
.step { height: 14px; background: #f8f8f8; border-bottom: 1px solid #b4b4b4; }
.step::after { content: ""; display: block; width: 7px; height: 4px; margin: 5px 0 0 3px; background: #4a4a4a; clip-path: polygon(0 100%, 50% 0, 100% 100%); }
.step.down { border: solid #b4b4b4; border-width: 1px 0 0; }
.step.down::after { clip-path: polygon(0 0, 50% 100%, 100% 0); }
.thumb { height: 133px; background: linear-gradient(90deg, #f5f5f5, #fff); border-bottom: 1px solid #b4b4b4; }
.track { flex: 1; background: #e4e4e4; }
.splitter { height: 6px; padding: 1px 0 0 140px; }
.splitter i { display: block; width: 17px; height: 3px; background: radial-gradient(circle, #999 .6px, transparent 1px) 0 0 / 3px 3px; }
.vsplit { width: 6px; padding: 262px 0 0 2px; }
.vsplit i { display: block; width: 3px; height: 17px; background: radial-gradient(circle, #999 .6px, transparent 1px) 0 0 / 3px 3px; }
.layer-list { flex: 1; background: #fff; border: 1px solid #b4b4b4; }
.layer { height: 18px; background: #efefef; display: flex; align-items: center; padding: 0 5px 0 23px; }
.check { width: 13px; height: 13px; background: #fff; border: 1px solid #b4b4b4; }
.check svg { width: 11px; height: 11px; }
.swatch { width: 16px; height: 16px; margin: 0 6px 0 7px; background: #6bab9a; border: 1px solid #578f80; }
.layer-name { flex: 1; font-weight: 700; letter-spacing: -.1px; text-decoration: underline; text-underline-offset: 2px; }
.crs { width: 16px; height: 16px; }

/* Map */
.canvas { flex: 1; position: relative; background: #fff; border: 1px solid #b4b4b4; }
.activation { position: absolute; left: 754px; top: 490px; color: #c3c3c3; white-space: nowrap; }
.activation p { margin: 0; font-size: 14px; line-height: 22px; letter-spacing: .16px; }
.activation .big { font-size: 19.5px; line-height: 23px; font-weight: 300; letter-spacing: .25px; }

/* Status bar */
.statusbar {
  flex: none;
  height: 29px;
  border-bottom: 1px solid #34384a;
  padding: 0 0 0 4px;
  display: grid;
  grid-template-columns: 207px 378px 57px 79px 28px 29px 91px 22px 48px 96px 51px 90px 18px 53px 19px 73px 20px;
  align-items: center;
  font: 11px/22px "DejaVu Sans Condensed", "DejaVu Sans", sans-serif;
  font-stretch: condensed;
  white-space: nowrap;
}
.statusbar span:not(.check) { padding-top: 2px; }
.field { height: 22px; background: #fff; border: 1px solid #b0b0b0; border-radius: 2px; padding-left: 6px; margin-right: 4px; display: flex; }
.locate { width: 200px; color: #777; padding-left: 7px; }
.locate svg { width: 14px; height: 14px; margin: 3px 6px 0 0; }
.combo { width: 81px; padding-left: 3px; margin: 0; }
.field em { height: 20px; margin-left: auto; border-left: 1px solid #b0b0b0; width: 20px; background: linear-gradient(#fff, #eee); }
.combo em { padding: 8px 0 0 4px; }
.spin { padding-left: 4px; margin-right: 8px; }
.spin.rotation { margin-right: 6px; }
.spin em { width: 14px; display: flex; flex-direction: column; gap: 4px; padding: 4px 0 0 3px; }
.spin em i { width: 7px; height: 4px; background: #555; clip-path: polygon(0 100%, 50% 0, 100% 100%); }
.spin em i + i { clip-path: polygon(0 0, 50% 100%, 100% 0); }
.st-icon { width: 16px; height: 16px; }
.epsg { letter-spacing: -.1px; }
```
